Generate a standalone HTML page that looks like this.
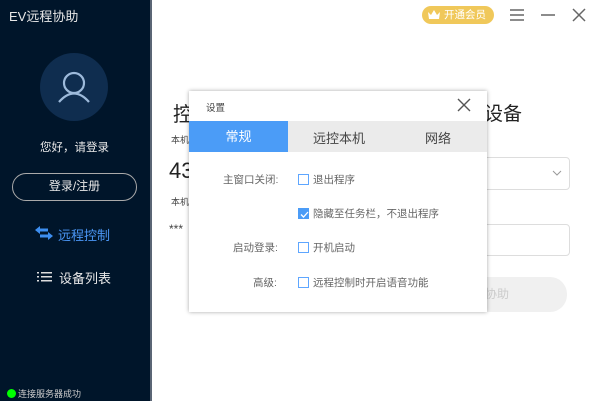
<!DOCTYPE html>
<html><head><meta charset="utf-8"><style>
*{margin:0;padding:0;box-sizing:border-box}
body{width:600px;height:401px;overflow:hidden;background:#fff;font-family:"Liberation Sans","Noto Sans CJK SC",sans-serif;position:relative}
.side{position:absolute;left:0;top:0;width:150px;height:401px;background:#00152a;color:#e8e8e8}
.abs{position:absolute}
.dlg{position:absolute;left:189px;top:91px;width:298px;height:221px;background:#fff;box-shadow:0 0 4px rgba(0,0,0,.35)}
.cb{position:absolute;width:11px;height:11px;border:1px solid #5ea6ff;background:#fff}
.lbl{position:absolute;font-size:10.5px;color:#666;white-space:nowrap}
</style></head><body>
<div class="side">
 <div class="abs" style="left:9px;top:6px;font-size:13px">EV远程协助</div>
 <div class="abs" style="left:40px;top:53px;width:68px;height:68px;border-radius:50%;background:#0f2d4f"></div>
 <svg class="abs" style="left:40px;top:53px" width="68" height="68"><circle cx="34" cy="30" r="10" fill="none" stroke="#9dbadb" stroke-width="2.2"/><path d="M19 49 Q34 32 49 49" fill="none" stroke="#9dbadb" stroke-width="2.2"/></svg>
 <div class="abs" style="left:40px;top:139px;font-size:11.5px">您好，请登录</div>
 <div class="abs" style="left:12px;top:173px;width:125px;height:28px;border:1.5px solid #aaa;border-radius:14px;font-size:12px;text-align:center;line-height:25px">登录/注册</div>
 <svg class="abs" style="left:34px;top:225px" width="20" height="16"><path d="M1 5 L6 1 L6 3.5 L14 3.5 L14 6.5 L6 6.5 L6 9 Z M19 11 L14 7 L14 9.5 L6 9.5 L6 12.5 L14 12.5 L14 15 Z" fill="#3d8ef0"/></svg>
 <div class="abs" style="left:58px;top:225px;font-size:13px;color:#4a96f5">远程控制</div>
 <svg class="abs" style="left:37px;top:272px" width="15" height="10"><g fill="#ddd"><rect x="0" y="0" width="2" height="1.5"/><rect x="0" y="4" width="2" height="1.5"/><rect x="0" y="8" width="2" height="1.5"/><rect x="4" y="0" width="11" height="1.5"/><rect x="4" y="4" width="11" height="1.5"/><rect x="4" y="8" width="11" height="1.5"/></g></svg>
 <div class="abs" style="left:59px;top:268px;font-size:13px">设备列表</div>
 <div class="abs" style="left:7px;top:389px;width:9px;height:9px;border-radius:50%;background:#0f0"></div>
 <div class="abs" style="left:18px;top:387px;font-size:9px;color:#ccc">连接服务器成功</div>
</div>
<div class="abs" style="left:150px;top:0;width:2px;height:401px;background:#5b6675"></div>
<div class="abs" style="left:422px;top:6px;width:72px;height:18px;border-radius:9px;background:#f0c85a;color:#fff;font-size:10.5px;line-height:18px;padding-left:22px">开通会员</div>
<svg class="abs" style="left:427px;top:9px" width="14" height="12"><path d="M1 3 L4 6 L7 1 L10 6 L13 3 L12 10 L2 10 Z" fill="#fff"/></svg>
<svg class="abs" style="left:508px;top:7px" width="80" height="16"><g stroke="#666" stroke-width="1.5"><path d="M2 3H16M2 8H16M2 13H16"/><path d="M33 8H47"/><path d="M65 2L77 14M77 2L65 14"/></g></svg>
<div class="abs" style="left:173px;top:98px;font-size:20px;color:#222">控</div>
<div class="abs" style="left:484px;top:99px;font-size:19px;color:#222">设备</div>
<div class="abs" style="left:171px;top:133px;font-size:9px;color:#444">本机</div>
<div class="abs" style="left:169px;top:158px;font-size:22px;color:#222">43</div>
<div class="abs" style="left:171px;top:195px;font-size:9px;color:#444">本机</div>
<div class="abs" style="left:169px;top:222px;font-size:12px;color:#444">***</div>
<div class="abs" style="left:470px;top:157px;width:100px;height:33px;border:1px solid #ddd;border-radius:4px"></div>
<svg class="abs" style="left:552px;top:169px" width="10" height="8"><path d="M1 2 L5 6 L9 2" fill="none" stroke="#999"/></svg>
<div class="abs" style="left:470px;top:224px;width:100px;height:32px;border:1px solid #ddd;border-radius:4px"></div>
<div class="abs" style="left:440px;top:277px;width:127px;height:35px;border-radius:17px;background:#f0f0f0;color:#ccc;font-size:12px;line-height:35px;padding-left:45px">协助</div>
<div class="dlg">
 <div class="abs" style="left:17px;top:9px;font-size:9.5px;color:#444">设置</div>
 <svg class="abs" style="left:268px;top:7px" width="14" height="14"><path d="M1 1L13 13M13 1L1 13" stroke="#555" stroke-width="1.4"/></svg>
 <div class="abs" style="left:0;top:30px;width:298px;height:31px;background:#ebebeb"></div>
 <div class="abs" style="left:0;top:30px;width:99px;height:31px;background:#4b9cf7;color:#fff;font-size:13px;text-align:center;line-height:31px">常规</div>
 <div class="abs" style="left:124px;top:37px;font-size:13px;color:#444">远控本机</div>
 <div class="abs" style="left:236px;top:37px;font-size:13px;color:#444">网络</div>
 <div class="lbl" style="left:34px;top:81px">主窗口关闭:</div>
 <div class="cb" style="left:109px;top:83px"></div><div class="lbl" style="left:124px;top:81px">退出程序</div>
 <div class="cb" style="left:109px;top:117px;background:#4b9cf7;border-color:#4b9cf7"></div>
 <svg class="abs" style="left:110px;top:118px" width="11" height="11"><path d="M2 5.5L4.5 8L9 3" fill="none" stroke="#fff" stroke-width="1.3"/></svg>
 <div class="lbl" style="left:124px;top:115px">隐藏至任务栏，不退出程序</div>
 <div class="lbl" style="left:44px;top:149px">启动登录:</div>
 <div class="cb" style="left:109px;top:151px"></div><div class="lbl" style="left:124px;top:149px">开机启动</div>
 <div class="lbl" style="left:64px;top:184px">高级:</div>
 <div class="cb" style="left:109px;top:186px"></div><div class="lbl" style="left:124px;top:184px">远程控制时开启语音功能</div>
</div>
</body></html>
